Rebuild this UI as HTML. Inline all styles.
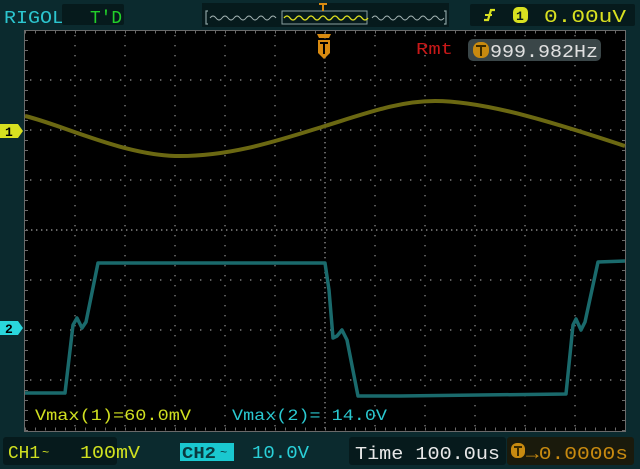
<!DOCTYPE html>
<html><head><meta charset="utf-8"><style>
html,body{margin:0;padding:0;background:#0b2a2e;width:640px;height:469px;overflow:hidden}
svg{display:block}
text{font-family:"Liberation Mono",monospace}
</style></head><body>
<svg width="640" height="469" viewBox="0 0 640 469" xmlns="http://www.w3.org/2000/svg">
<rect width="640" height="469" fill="#0b2a2e"/>
<!-- top boxes -->
<text x="4" y="23" font-size="18" fill="#2cc6cf" textLength="60" lengthAdjust="spacingAndGlyphs">RIGOL</text>
<rect x="62" y="4" width="62" height="21" rx="2" fill="#061a1c"/>
<text x="90" y="23" font-size="18" fill="#22d02a" textLength="32" lengthAdjust="spacingAndGlyphs">T'D</text>
<rect x="202" y="3" width="247" height="24" fill="#061a1c"/>
<path d="M208 11h-2v13h2M444 11h2v13h-2" stroke="#8aa0a0" fill="none" stroke-width="1.2"/>
<path d="M210 18 q3 -4 6 0 t6 0 t6 0 t6 0 t6 0 t6 0 t6 0 t6 0 t6 0 t6 0 t6 0" stroke="#a0b0b0" fill="none" stroke-width="1"/>
<path d="M372 18 q3 -4 6 0 t6 0 t6 0 t6 0 t6 0 t6 0 t6 0 t6 0 t6 0 t6 0 t6 0 t6 0" stroke="#a0b0b0" fill="none" stroke-width="1"/>
<rect x="282" y="11" width="85" height="13" fill="none" stroke="#8aa0a0" stroke-width="1"/>
<path d="M284 18 q3 -4 6 0 t6 0 t6 0 t6 0 t6 0 t6 0 t6 0 t6 0 t6 0 t6 0 t6 0 t6 0 t6 0 t6 0" stroke="#e0e020" fill="none" stroke-width="1.3"/>
<path d="M319 4h8M323 4v7" stroke="#d88a10" stroke-width="2"/>
<rect x="470" y="4" width="165" height="22" rx="2" fill="#061a1c"/>
<path d="M484 20h4l3-10h4" stroke="#d8e020" stroke-width="2.2" fill="none"/><path d="M485 15h7" stroke="#d8e020" stroke-width="2"/>
<rect x="513" y="7" width="15" height="16" rx="5" fill="#d8e020"/>
<text x="516" y="20" font-size="13" font-weight="bold" fill="#061a1c">1</text>
<text x="544" y="22" font-size="18" fill="#d8e020" textLength="82" lengthAdjust="spacingAndGlyphs">0.00uV</text>
<!-- screen -->
<rect x="24" y="30" width="602" height="402" fill="#000"/>
<rect x="24.5" y="30.5" width="601" height="401" fill="none" stroke="#6a6a6a" stroke-width="1"/>
<g stroke="#7a7a7a" stroke-width="1.4" stroke-dasharray="1.4 8.6">
<line x1="75" y1="35" x2="75" y2="432"/><line x1="125" y1="35" x2="125" y2="432"/><line x1="175" y1="35" x2="175" y2="432"/><line x1="225" y1="35" x2="225" y2="432"/><line x1="275" y1="35" x2="275" y2="432"/><line x1="375" y1="35" x2="375" y2="432"/><line x1="425" y1="35" x2="425" y2="432"/><line x1="475" y1="35" x2="475" y2="432"/><line x1="525" y1="35" x2="525" y2="432"/><line x1="575" y1="35" x2="575" y2="432"/>
<line x1="30" y1="80" x2="626" y2="80"/><line x1="30" y1="130" x2="626" y2="130"/><line x1="30" y1="180" x2="626" y2="180"/><line x1="30" y1="280" x2="626" y2="280"/><line x1="30" y1="330" x2="626" y2="330"/><line x1="30" y1="380" x2="626" y2="380"/>
</g>
<g stroke="#8a8a8a" stroke-width="1.4" stroke-dasharray="1.4 3.6">
<line x1="325" y1="32" x2="325" y2="432"/><line x1="26" y1="230" x2="626" y2="230"/>
</g>
<g stroke="#6a6a6a" stroke-width="3" stroke-dasharray="1 9">
<line x1="25" y1="32" x2="626" y2="32"/><line x1="25" y1="429" x2="626" y2="429"/>
<line x1="26.5" y1="30" x2="26.5" y2="432"/><line x1="623.5" y1="30" x2="623.5" y2="432"/>
</g>
<!-- ch1 sine -->
<path d="M25 116 C60 124 120 154 175 156 C230 157 280 140 325 126 C370 112 400 101 435 101 C490 101 570 128 625 146" stroke="#6b6812" stroke-width="4" fill="none"/>
<!-- ch2 square -->
<path d="M25 393 L65 393 L73 325 L77 318 L82 328 L86 322 L98 263 L325 263 L329 290 L333 338 L337 336 L342 330 L347 340 L358 396 L400 396 L566 394 L573 325 L576 319 L581 330 L585 322 L598 262 L625 261" stroke="#1a6a6c" stroke-width="3.5" fill="none" stroke-linejoin="round"/>
<!-- trigger marker -->
<path d="M317 34h14l-2 4h-10z" fill="#d88a10"/>
<path d="M318 40h12v13l-6 6l-6-6z" fill="#d88a10"/>
<path d="M320 43h8M324 43v11" stroke="#000" stroke-width="2"/>
<!-- rmt -->
<text x="416" y="54" font-size="17" fill="#c81818" textLength="37" lengthAdjust="spacingAndGlyphs">Rmt</text>
<rect x="468" y="39" width="133" height="22" rx="5" fill="#3a4648"/>
<rect x="473" y="42" width="16" height="16" rx="7" fill="#c88a10"/>
<path d="M476 46h10M481 46v10" stroke="#3a2a00" stroke-width="2"/>
<text x="490" y="57" font-size="18" fill="#e0e0e0" textLength="108" lengthAdjust="spacingAndGlyphs">999.982Hz</text>
<!-- channel markers -->
<path d="M0 124h18l5 7l-5 7h-18z" fill="#d8e020"/>
<text x="5" y="136" font-size="13" font-weight="bold" fill="#000">1</text>
<path d="M0 321h18l5 7l-5 7h-18z" fill="#2ad6dc"/>
<text x="5" y="333" font-size="13" font-weight="bold" fill="#000">2</text>
<!-- measurements -->
<text x="35" y="420" font-size="16" fill="#d0e020" textLength="156" lengthAdjust="spacingAndGlyphs">Vmax(1)=60.0mV</text>
<text x="232" y="420" font-size="16" fill="#2ac8d0" textLength="155" lengthAdjust="spacingAndGlyphs">Vmax(2)= 14.0V</text>
<!-- bottom bar -->
<rect x="3" y="437" width="114" height="28" rx="3" fill="#061a1c"/>
<text x="8" y="458" font-size="18" fill="#d0e020" textLength="32" lengthAdjust="spacingAndGlyphs">CH1</text>
<text x="42" y="456" font-size="12" fill="#d0e020">~</text>
<text x="80" y="458" font-size="18" fill="#d0e020" textLength="60" lengthAdjust="spacingAndGlyphs">100mV</text>
<rect x="180" y="443" width="54" height="18" fill="#1ac8d0"/>
<text x="182" y="458" font-size="17" font-weight="bold" fill="#0a3a40" textLength="34" lengthAdjust="spacingAndGlyphs">CH2</text>
<text x="220" y="456" font-size="12" fill="#0a3a40">~</text>
<text x="252" y="458" font-size="18" fill="#2ad0d8" textLength="57" lengthAdjust="spacingAndGlyphs">10.0V</text>
<rect x="349" y="437" width="157" height="28" rx="3" fill="#061a1c"/>
<text x="355" y="459" font-size="18" fill="#e8e8e8" textLength="145" lengthAdjust="spacingAndGlyphs">Time 100.0us</text>
<rect x="507" y="437" width="127" height="28" rx="3" fill="#1a1a0c"/>
<rect x="511" y="443" width="14" height="15" rx="6" fill="#c88a10"/>
<path d="M514 447h8M518 447v9" stroke="#3a2a00" stroke-width="2"/>
<text x="526" y="459" font-size="18" fill="#c88a10" textLength="102" lengthAdjust="spacingAndGlyphs">→0.0000s</text>
</svg>
</body></html>
